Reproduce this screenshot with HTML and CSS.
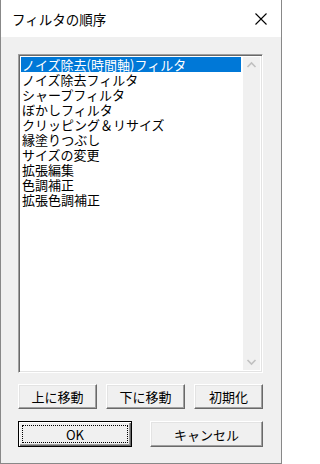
FILE: index.html
```html
<!DOCTYPE html>
<html lang="ja">
<head>
<meta charset="utf-8">
<link rel="stylesheet" href="styles.css">
</head>
<body>
<div class="window">
  <div class="titlebar">
    <span class="title">フィルタの順序</span>
    <svg class="close" width="12" height="12" viewBox="0 0 12 12"><path d="M0.5 0.5L11.5 11.5M11.5 0.5L0.5 11.5" stroke="#000" stroke-width="1.1" fill="none"/></svg>
  </div>
  <div class="client">
    <div class="listbox">
      <ul class="items">
        <li class="sel">ノイズ除去(時間軸)フィルタ</li>
        <li>ノイズ除去フィルタ</li>
        <li>シャープフィルタ</li>
        <li>ぼかしフィルタ</li>
        <li>クリッピング＆リサイズ</li>
        <li>縁塗りつぶし</li>
        <li>サイズの変更</li>
        <li>拡張編集</li>
        <li>色調補正</li>
        <li>拡張色調補正</li>
      </ul>
      <div class="scrollbar">
        <svg width="17" height="17" viewBox="0 0 17 17"><path d="M4.5 10L8.5 6L12.5 10" stroke="#c0c0c0" stroke-width="1.6" fill="none"/></svg>
        <svg width="17" height="17" viewBox="0 0 17 17"><path d="M4.5 7L8.5 11L12.5 7" stroke="#c0c0c0" stroke-width="1.6" fill="none"/></svg>
      </div>
    </div>
    <div class="row row1">
      <button class="btn w79">上に移動</button>
      <button class="btn w79">下に移動</button>
      <button class="btn w69">初期化</button>
    </div>
    <div class="row row2">
      <button class="btn default w114"><span class="focus">OK</span></button>
      <button class="btn w113">キャンセル</button>
    </div>
  </div>
</div>
</body>
</html>
```

FILE: styles.css
```css
html, body {
  margin: 0;
  padding: 0;
  width: 282px;
  height: 464px;
  overflow: hidden;
}
body {
  font-family: "Noto Sans CJK JP", "Noto Sans", sans-serif;
  font-size: 12px;
  color: #000;
}
.window {
  box-sizing: border-box;
  width: 282px;
  height: 464px;
  border: 1px solid #888888;
  border-top: none;
  display: flex;
  flex-direction: column;
  background: #f0f0f0;
}
.titlebar {
  height: 37px;
  background: #fff;
  display: flex;
  align-items: center;
  justify-content: space-between;
  padding: 0 14px 0 11px;
  flex: none;
}
.title {
  font-size: 13.5px;
  line-height: 16px;
  padding-top: 1px;
}
.close {
  display: block;
}
.client {
  flex: 1;
  padding: 17px 17px 0 17px;
  display: flex;
  flex-direction: column;
}
.listbox {
  box-sizing: border-box;
  height: 319px;
  width: 245px;
  border-top: 1px solid #a0a0a0;
  border-left: 1px solid #a0a0a0;
  border-right: 1px solid #ffffff;
  border-bottom: 1px solid #ffffff;
  display: flex;
  background: #fff;
  box-shadow: inset 1px 1px 0 #696969, inset -1px -1px 0 #e3e3e3;
  padding: 2px;
}
.items {
  list-style: none;
  margin: 0;
  padding: 0;
  flex: 1;
  font-size: 13px;
  line-height: 15px;
}
.items li {
  height: 15px;
  padding-left: 1px;
  white-space: nowrap;
}
.items li.sel {
  background: #0078d7;
  color: #fff;
}
.scrollbar {
  width: 17px;
  background: #f0f0f0;
  display: flex;
  flex-direction: column;
  justify-content: space-between;
  margin-left: 2px;
}
.scrollbar svg {
  display: block;
}
.row {
  display: flex;
  justify-content: space-between;
  width: 245px;
}
.row1 {
  margin-top: 11px;
  height: 25px;
}
.row2 {
  margin-top: 12px;
  height: 26px;
}
.btn {
  box-sizing: border-box;
  height: 100%;
  margin: 0;
  padding: 0;
  font-family: inherit;
  font-size: 13px;
  color: #000;
  background: #f0f0f0;
  border-top: 1px solid #ffffff;
  border-left: 1px solid #ffffff;
  border-right: 1px solid #696969;
  border-bottom: 1px solid #696969;
  box-shadow: inset -1px -1px 0 #a0a0a0, inset 1px 1px 0 #e3e3e3;
  display: flex;
  align-items: center;
  justify-content: center;
}
.w79 { width: 79px; }
.w69 { width: 69px; }
.w114 { width: 114px; }
.w113 { width: 113px; }
.btn.default {
  border: 1px solid #000;
  box-shadow: inset 1px 1px 0 #fff, inset -1px -1px 0 #696969, inset -2px -2px 0 #a0a0a0;
  padding: 3px;
}
.focus {
  box-sizing: border-box;
  width: 100%;
  height: 100%;
  border: 1px dotted #000;
  display: flex;
  align-items: center;
  justify-content: center;
}
```
